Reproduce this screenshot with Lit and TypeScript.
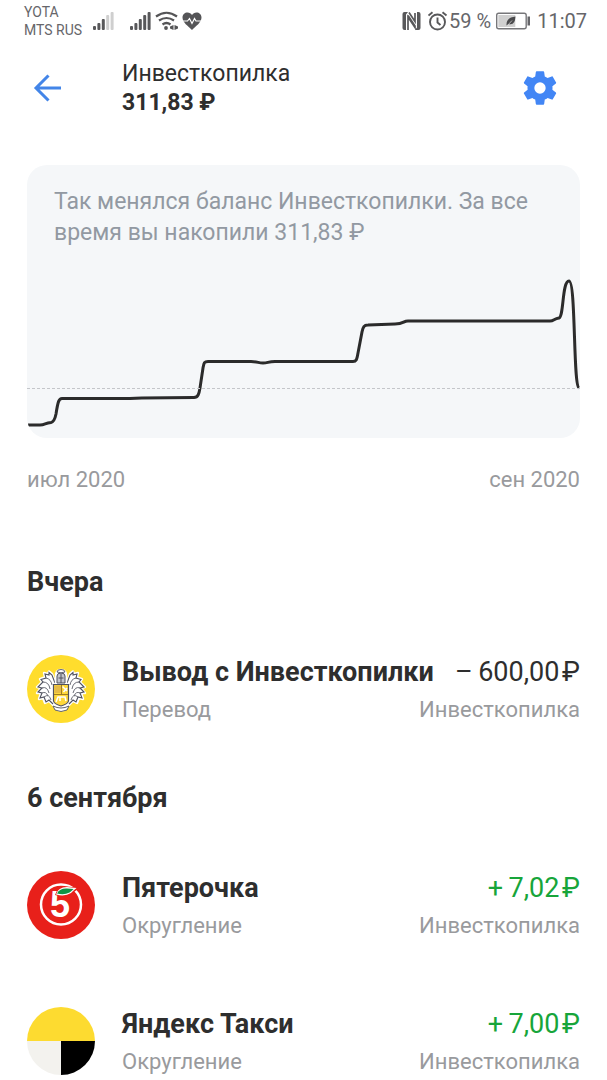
import { LitElement, html, svg, css } from "lit";
import { customElement, property } from "lit/decorators.js";

type LogoName = "bank" | "five" | "taxi";

interface Operation {
  logo: LogoName;
  title: string;
  kind: string;
  amount: string;
  income: boolean;
}

interface Day {
  label: string;
  operations: Operation[];
}

const DAYS: Day[] = [
  {
    label: "Вчера",
    operations: [
      { logo: "bank", title: "Вывод с Инвесткопилки", kind: "Перевод", amount: "–\u2009600,00\u200a₽", income: false },
    ],
  },
  {
    label: "6 сентября",
    operations: [
      { logo: "five", title: "Пятерочка", kind: "Округление", amount: "+\u20097,02\u200a₽", income: true },
      { logo: "taxi", title: "Яндекс Такси", kind: "Округление", amount: "+\u20097,00\u200a₽", income: true },
    ],
  },
];

const crestHalf = svg`
  <path d="M28 27 L25 19 L22 16.500 L21 19 L17 18 L18 22 L13 24 L15 27 L10 32 L14 33 L10 38 L14 38 L12 44 L16 43 L18 48 L22 46 L26 50 L29 53 L34 55 V27 Z" fill="#fff" stroke="#fff" stroke-width="2.400" stroke-linejoin="round"/>
  <path d="M28 28 L25 20 L22 17.500 L22 20 L18 19 L19 23 L14 24.500 L16 27 L11 32 L15 33 L11 37 L15 38 L13 43 L17 42 L19 47 L22 45 L26 49" fill="none" stroke="#50525f" stroke-width="1.100"/>
  <path d="M19 23 Q24 24 25 30 M16 27 Q22 27 23 34 M15 33 Q20 31 22 38 M15 38 Q19 36 21 41 M17 42 Q22 38 24 45" fill="none" stroke="#6c6e78" stroke-width="1"/>`;

const LOGOS = {
  bank: svg`
    <circle cx="34" cy="34" r="34" fill="#ffdd2d"/>
    ${crestHalf}
    <g transform="translate(68 0) scale(-1 1)">${crestHalf}</g>
    <path d="M29 28 V19 Q30 15 34 15 Q38 15 39 19 V28 Z" fill="#fff" stroke="#fff" stroke-width="2.400"/>
    <path d="M30 28 V21 Q30 18 34 18 Q38 18 38 21 V28 Z" fill="#c3c5cd" stroke="#50525f" stroke-width="1"/>
    <path d="M30 17 Q30 14.500 34 14.500 Q38 14.500 38 17 Q34 18.500 30 17 Z" fill="#fff" stroke="#50525f" stroke-width="0.900"/>
    <path d="M34 19 V28 M31.500 23 H36.500" fill="none" stroke="#50525f" stroke-width="1"/>
    <path d="M26.500 29.500 H41.500 V46 Q41 49 34 51 Q27 49 26.500 46 Z" fill="#ffd83a" stroke="#50525f" stroke-width="1.200"/>
    <path d="M27.500 30.500 H34 V38 H27.500 Z" fill="#e6bb45"/>
    <path d="M35.500 31.500 L40 36 M36.500 37 L40 33 M29 47 L31 42 H38 L39 46 M33 42 V46" fill="none" stroke="#fff" stroke-width="1.500"/>
    <path d="M27 39.500 H41 M34.500 30 V39.500" stroke="#94721f" stroke-width="0.900"/>
    <path d="M26 51 Q34 55 42 51 L40 55 Q34 58 28 55 Z" fill="#fff" stroke="#50525f" stroke-width="0.900"/>`,
  five: svg`
    <circle cx="34" cy="34" r="34" fill="#e8201a"/>
    <circle cx="34" cy="33.500" r="20" fill="none" stroke="#fff" stroke-width="2.500"/>
    <text class="five" x="33" y="46" text-anchor="middle" fill="#fff">5</text>
    <path d="M28 24 Q30 15.500 40 15.500 Q45 16 50 16 L50.500 18.500 Q46.500 21 44 23.500 Q38 27.500 28 24 Z" fill="#e8201a"/>
    <path d="M29 23.500 Q31 16 40 16 L49.500 17 Q46.500 19.500 44 22 Q38 26 29 23.500 Z" fill="#fff"/>
    <path d="M30 22.500 Q33 17 40 17.500 L46.500 18 Q44.500 20 42.500 21.500 Q37 24.500 30 22.500 Z" fill="#0d9345"/>`,
  taxi: svg`
    <path d="M0 34 A34 34 0 0 1 68 34 Z" fill="#fddb30"/>
    <path d="M0 34 A34 34 0 0 0 34 68 V34 Z" fill="#f3f2ee"/>
    <path d="M34 34 V68 A34 34 0 0 0 68 34 Z" fill="#000"/>`,
};

@customElement("status-bar")
class StatusBar extends LitElement {
  static styles = css`
    :host {
      display: flex;
      align-items: center;
      justify-content: space-between;
      height: 42px;
      padding: 0 20px 0 24px;
      color: #66666a;
    }
    .side {
      display: flex;
      align-items: center;
    }
    .carriers {
      font-size: 14px;
      line-height: 18px;
      margin-right: 11px;
    }
    .text {
      font-size: 20px;
      line-height: 24px;
    }
    svg {
      display: block;
    }
  `;

  private bars(active: number) {
    const heights = [4, 7, 11, 15, 18];
    return html`<svg width="22" height="20" viewBox="0 0 22 20" aria-hidden="true">
      ${heights.map(
        (h, i) => svg`<rect x=${i * 4.4} y=${19 - h} width="3" height=${h} rx="1" fill=${i < active ? "#58585a" : "#cfcfcf"} />`
      )}
    </svg>`;
  }

  render() {
    return html`
      <div class="side">
        <div class="carriers">YOTA<br />MTS RUS</div>
        ${this.bars(3)}
        <svg width="15" height="20" aria-hidden="true"></svg>
        ${this.bars(5)}
        <svg width="30" height="20" viewBox="0 0 30 20" fill="none" stroke="#555557" stroke-width="2.200" aria-hidden="true">
          <path d="M4 5.500 Q14.500 -2 25 5.500 M7 9.500 Q14.500 4.500 22 9.500 M10.500 13.500 Q14.500 10.500 18.500 13.500" />
          <circle cx="14" cy="17" r="1.900" fill="#555557" stroke="none" />
          <path d="M21.500 14 V19 L18 17.500 V15.500 Z M22.500 14 V19 L26 17.500 V15.500 Z" fill="#555557" stroke="none" />
        </svg>
        <svg width="20" height="20" viewBox="0 0 20 20" aria-hidden="true">
          <path d="M10 19 C6 15 0.500 11.500 0.500 6.500 C0.500 3.500 2.800 1.500 5.500 1.500 C7.500 1.500 9 2.500 10 4 C11 2.500 12.500 1.500 14.500 1.500 C17.200 1.500 19.500 3.500 19.500 6.500 C19.500 11.500 14 15 10 19 Z" fill="#555557" />
          <path d="M0 10 H5.500 L7.500 7.500 L10 12.500 L12.500 7.500 L14 10 H20" fill="none" stroke="#fff" stroke-width="1.200" />
        </svg>
      </div>
      <div class="side">
        <svg width="26" height="20" viewBox="0 0 26 20" aria-hidden="true">
          <path d="M0.500 3 Q0.500 1 2.500 1 H6 L4 3.500 V19 H2.500 Q0.500 19 0.500 17 Z M18.500 3 Q18.500 1 16.500 1 H15 V16.500 L13 19 H16.500 Q18.500 19 18.500 17 Z" fill="#58585a" />
          <path d="M6 19 V6 L13 16.500 V15 L6 4.500 M7 1.500 L13 10.500 V2" fill="none" stroke="#58585a" stroke-width="1.700" />
        </svg>
        <svg width="21" height="20" viewBox="0 0 21 20" fill="none" stroke="#58585a" stroke-width="1.900" aria-hidden="true">
          <circle cx="9.500" cy="11" r="7.500" />
          <path d="M9.500 6.500 V11.500 L12.500 14 M0.500 4.500 L4.500 1.300 M18.500 4.500 L14.500 1.300" />
        </svg>
        <span class="text">59 %</span>
        <svg width="46" height="20" viewBox="0 0 46 20" aria-hidden="true">
          <rect x="5.700" y="2.200" width="29.500" height="15.500" rx="2" fill="#fff" stroke="#77777a" stroke-width="1.400" />
          <rect x="7.300" y="4" width="17" height="12" fill="#d0d0d0" />
          <path d="M36.500 5.500 H39 V14.500 H36.500 Z" fill="#66666a" />
          <path d="M24.500 5.500 Q15 6.500 15.500 14.500 L17.500 13 Q24 15 24.500 5.500 Z" fill="#4a4a4c" />
          <path d="M16 15 L21 9.500" stroke="#d0d0d0" stroke-width="0.800" />
        </svg>
        <span class="text">11:07</span>
      </div>
    `;
  }
}

@customElement("balance-chart")
class BalanceChart extends LitElement {
  static styles = css`
    :host {
      display: block;
    }
    .card {
      background: #f5f7f9;
      border-radius: 20px;
      padding-top: 21px;
      overflow: hidden;
    }
    .note {
      margin: 0;
      padding: 0 27px;
      font-size: 23px;
      line-height: 31px;
      color: #9299a2;
    }
    .plot {
      display: block;
      width: 100%;
      height: 190px;
    }
    .plot path {
      fill: none;
      vector-effect: non-scaling-stroke;
    }
    .zero {
      stroke: #c4c6ca;
      stroke-width: 1;
      stroke-dasharray: 3 2;
    }
    .line {
      stroke: #2b2b2b;
      stroke-width: 3;
      stroke-linejoin: round;
    }
    .range {
      display: flex;
      justify-content: space-between;
      margin-top: 28px;
      font-size: 22px;
      line-height: 28px;
      color: #999a9d;
    }
  `;

  render() {
    return html`
      <div class="card">
        <p class="note">Так менялся баланс Инвесткопилки. За все время вы накопили 311,83&nbsp;₽</p>
        <svg class="plot" viewBox="0 0 553 190" preserveAspectRatio="none" role="img" aria-label="Баланс">
          <path
            class="line"
            d="M1 177 H13 C18 177 18 175 24 174.500 C27 174 28 171 29 166 C31 153 32 150.500 35 150.500 H103 Q108 150 115 150 L167 149.500 C171 149.500 172 146 173 140 L176 120 C177 115 177 113.500 181 113.500 H224 C231 113.500 231 115 236 115 C241 115 241 113.500 248 113.500 L326 113.500 C330 113.500 330 110 331 105 L335 84 C336 79 337 77 341 77 L368 76 C377 76 376 73 381 73 L523 73 C527 73 527 70.500 532 70 C537 68 535 33 542 33 C549 33 546 137 552 140"
          />
          <path class="zero" d="M0 140.500 H553" />
        </svg>
      </div>
      <div class="range"><span>июл 2020</span><span>сен 2020</span></div>
    `;
  }
}

@customElement("operation-row")
class OperationRow extends LitElement {
  @property({ attribute: false }) operation!: Operation;

  static styles = css`
    :host {
      display: flex;
      align-items: flex-start;
      gap: 27px;
    }
    .logo {
      display: block;
      flex: none;
      width: 68px;
      height: 68px;
    }
    .five {
      font: 700 36px "Liberation Sans", sans-serif;
    }
    .body {
      flex: 1;
      min-width: 0;
      display: grid;
      row-gap: 4px;
      line-height: 34px;
      white-space: nowrap;
    }
    .pair {
      display: flex;
      justify-content: space-between;
      gap: 12px;
    }
    .main {
      font-size: 27px;
    }
    .title {
      font-weight: 700;
    }
    .income {
      color: #17a53a;
    }
    .sub {
      font-size: 22px;
      color: #999a9d;
    }
  `;

  render() {
    const o = this.operation;
    return html`
      <svg class="logo" viewBox="0 0 68 68" aria-hidden="true">${LOGOS[o.logo]}</svg>
      <div class="body">
        <div class="pair main">
          <span class="title">${o.title}</span>
          <span class=${o.income ? "income" : "expense"}>${o.amount}</span>
        </div>
        <div class="pair sub"><span>${o.kind}</span><span>Инвесткопилка</span></div>
      </div>
    `;
  }
}

@customElement("app-root")
class AppRoot extends LitElement {
  static styles = css`
    :host {
      display: block;
      background: #fff;
      color: #2e2e2e;
      font-family: Roboto, sans-serif;
    }
    header {
      display: flex;
      align-items: center;
      gap: 55px;
      height: 92px;
      padding: 0 47px 0 27px;
    }
    button {
      flex: none;
      display: grid;
      place-items: center;
      width: 40px;
      height: 40px;
      padding: 0;
      border: 0;
      background: none;
      cursor: pointer;
    }
    .heading {
      flex: 1;
      line-height: 29px;
    }
    h1,
    p {
      margin: 0;
      font-size: 23px;
      font-weight: 400;
    }
    .balance {
      font-weight: 700;
    }
    main {
      padding: 31px 27px 0;
    }
    .history {
      display: grid;
      gap: 55px;
      margin-top: 72px;
    }
    h2 {
      margin: 0 0 57px;
      font-size: 27px;
      line-height: 32px;
      font-weight: 700;
    }
    .operations {
      display: grid;
      gap: 64px;
    }
  `;

  render() {
    return html`
      <status-bar></status-bar>
      <header>
        <button aria-label="Назад">
          <svg width="40" height="40" viewBox="0 0 40 40" fill="none" stroke="#4385e8" stroke-width="3" aria-hidden="true">
            <path d="M34 20 H9 M21.500 7.500 L9 20 L21.500 32.500" />
          </svg>
        </button>
        <div class="heading">
          <h1>Инвесткопилка</h1>
          <p class="balance">311,83 ₽</p>
        </div>
        <button aria-label="Настройки">
          <svg width="40" height="40" viewBox="0 0 24 24" fill="#4286f5" aria-hidden="true">
            <path
              d="M19.430 12.980c.04-.32.07-.64.07-.98s-.03-.66-.07-.98l2.110-1.650c.19-.15.24-.42.12-.64l-2-3.460c-.12-.22-.39-.3-.61-.22l-2.490 1c-.52-.4-1.080-.73-1.690-.98l-.38-2.650C14.460 2.180 14.250 2 14 2h-4c-.25 0-.46.18-.49.42l-.38 2.650c-.61.25-1.170.59-1.690.98l-2.490-1c-.23-.09-.49 0-.61.22l-2 3.460c-.13.22-.07.49.12.64l2.110 1.650c-.04.32-.07.65-.07.98s.03.66.07.98l-2.110 1.650c-.19.15-.24.42-.12.64l2 3.460c.12.22.39.3.61.22l2.490-1c.52.4 1.080.73 1.690.98l.38 2.650c.03.24.24.42.49.42h4c.25 0 .46-.18.49-.42l.38-2.650c.61-.25 1.170-.59 1.690-.98l2.490 1c.23.09.49 0 .61-.22l2-3.460c.12-.22.07-.49-.12-.64l-2.110-1.650zM12 15.400a3.400 3.400 0 1 1 0-6.800a3.400 3.400 0 0 1 0 6.800z"
            />
          </svg>
        </button>
      </header>
      <main>
        <balance-chart></balance-chart>
        <div class="history">
          ${DAYS.map(
            (day) => html`
              <section>
                <h2>${day.label}</h2>
                <div class="operations">
                  ${day.operations.map((o) => html`<operation-row .operation=${o}></operation-row>`)}
                </div>
              </section>
            `
          )}
        </div>
      </main>
    `;
  }
}
